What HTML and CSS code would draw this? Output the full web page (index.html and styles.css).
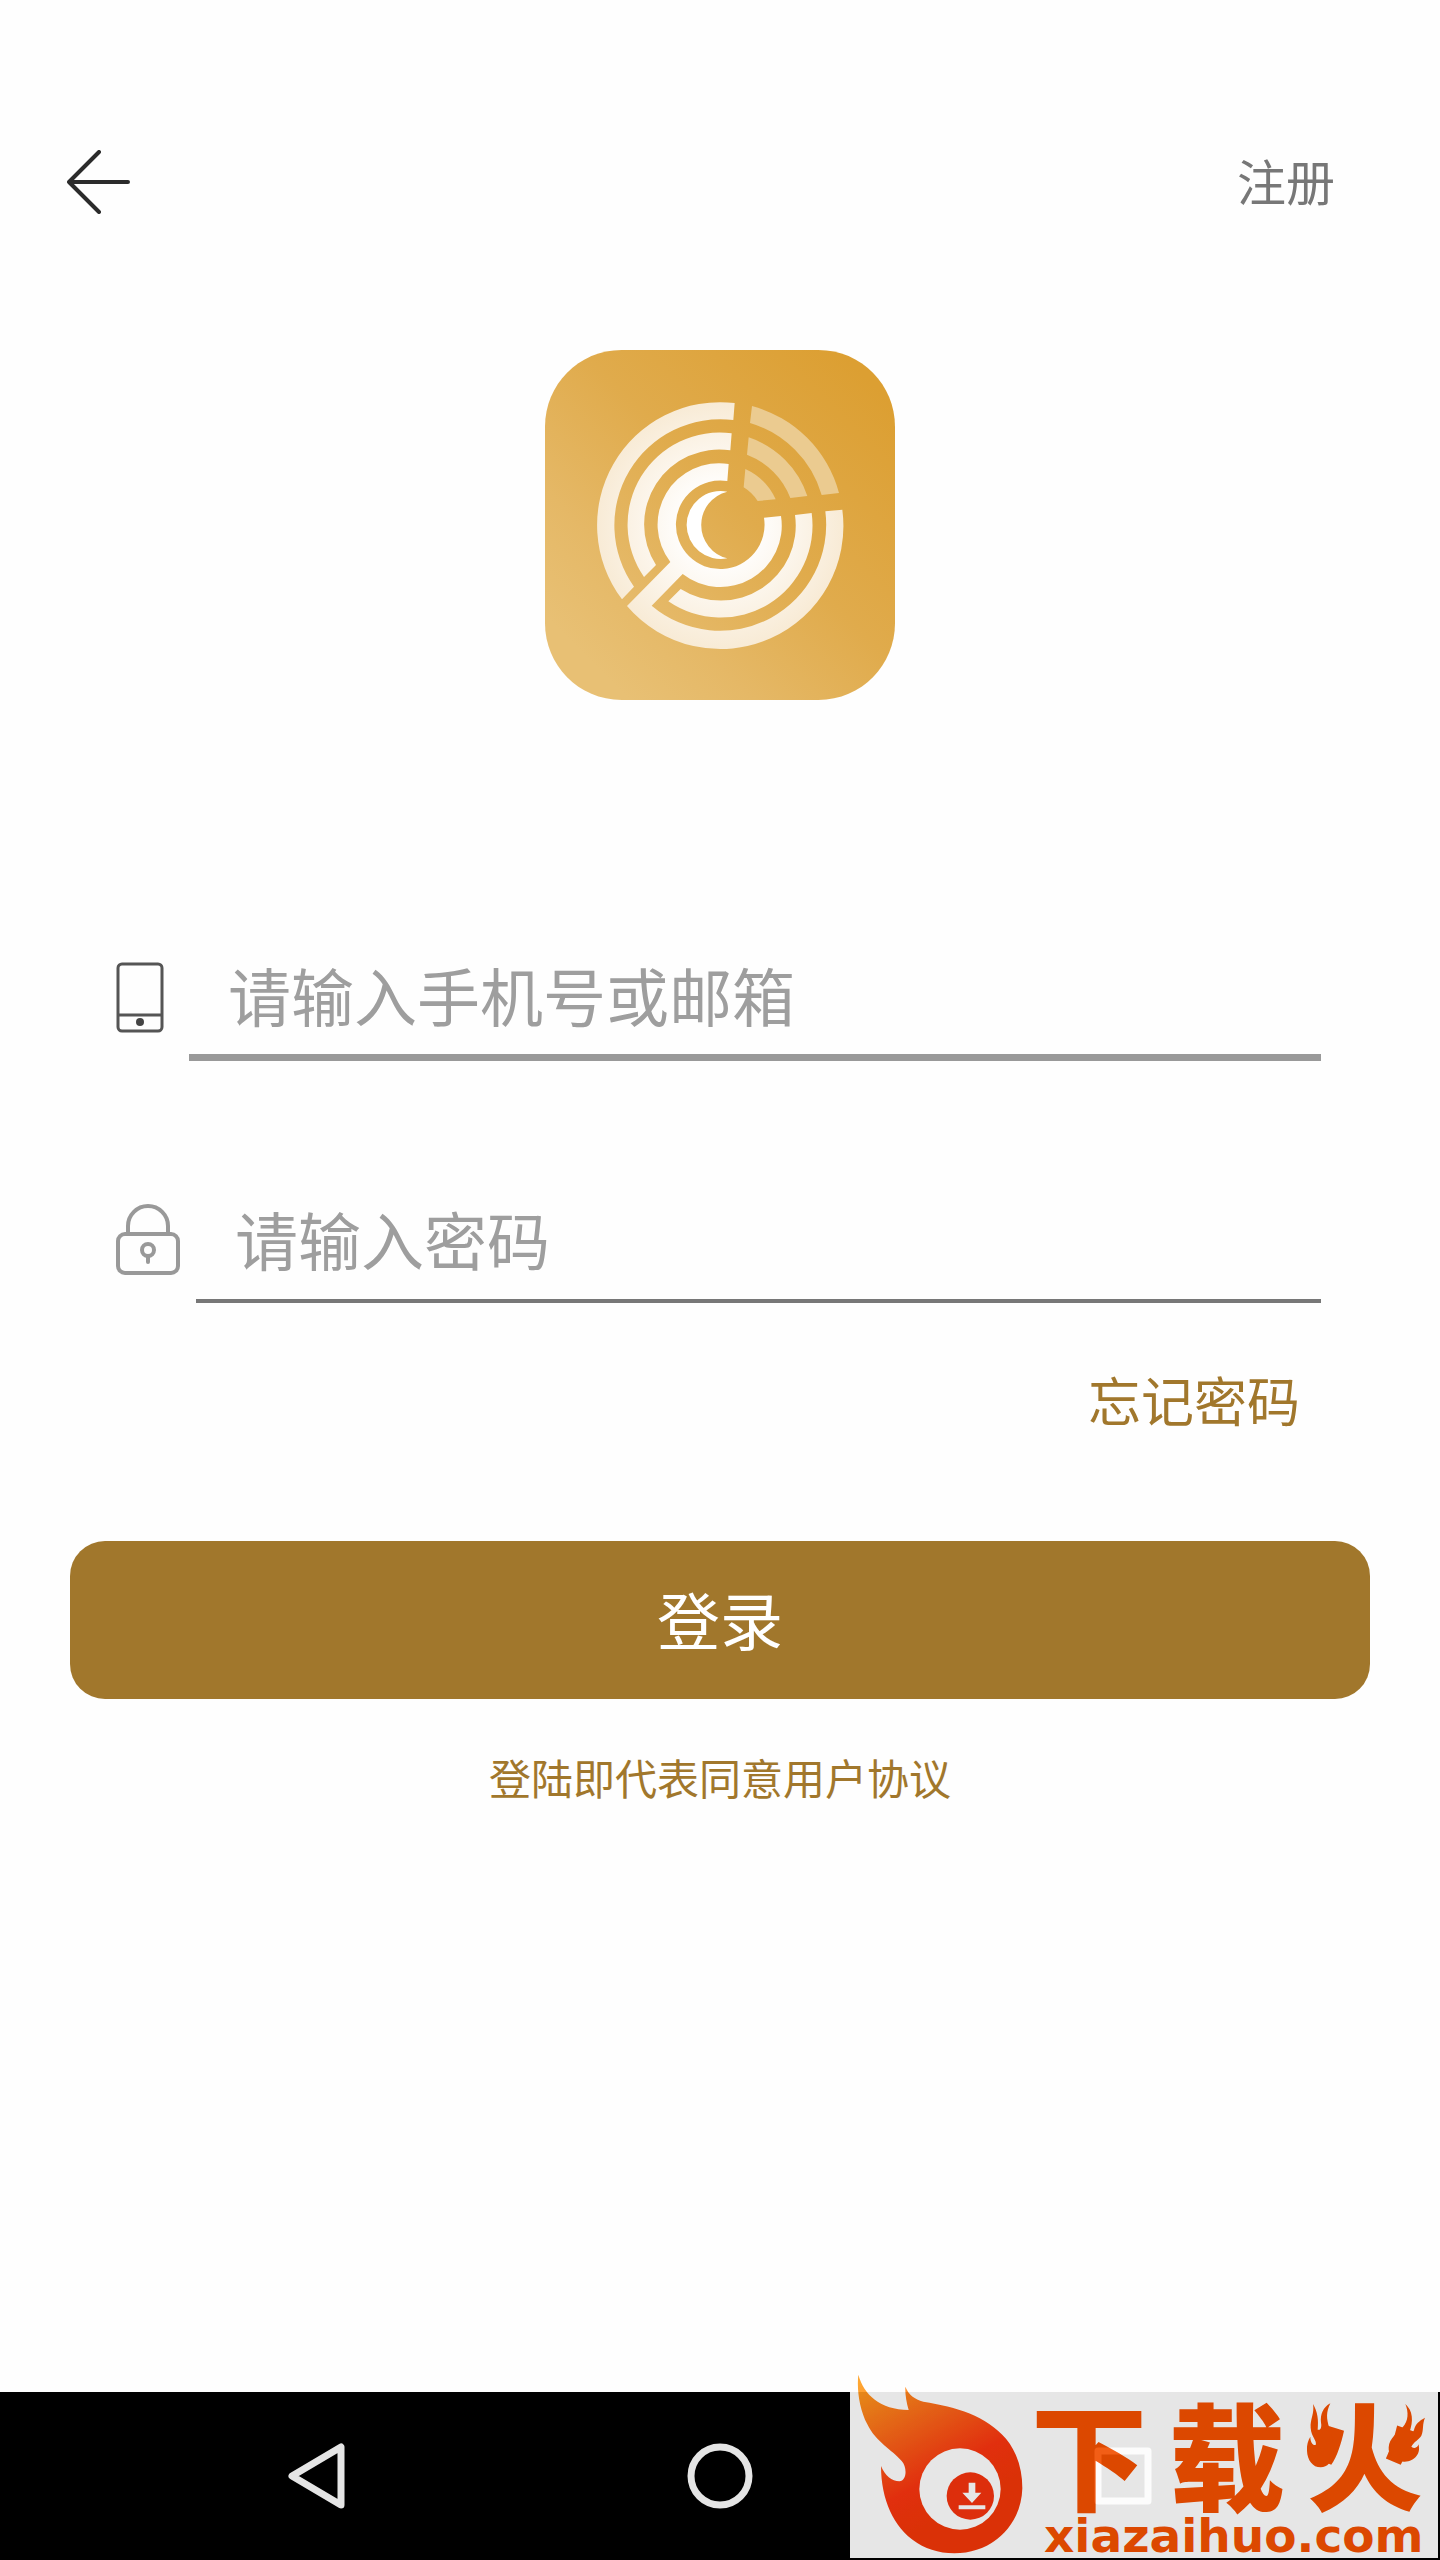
FILE: index.html
```html
<!DOCTYPE html>
<html lang="zh-CN">
<head>
<meta charset="utf-8">
<meta name="viewport" content="width=device-width, initial-scale=1">
<title>登录</title>
<link rel="stylesheet" href="styles.css">
</head>
<body>
<header class="topbar">
  <button class="back" type="button" aria-label="返回">
    <svg width="64" height="64" viewBox="0 0 64 64" fill="none" stroke="#2b2b2b" stroke-width="4" stroke-linecap="round" stroke-linejoin="round"><path d="M32 2 2 32 32 62M2 32H61"/></svg>
  </button>
  <a class="register" href="#register">注册</a>
</header>

<main class="content">
  <svg class="logo" viewBox="45 45 1050 1050" role="img" aria-label="应用标志">
    <defs>
      <linearGradient id="gold" x1="0" y1="1" x2="1" y2="0">
        <stop offset="0.12" stop-color="#e8c074"/>
        <stop offset="0.3" stop-color="#e5b866"/>
        <stop offset="0.55" stop-color="#e0ab4c"/>
        <stop offset="0.92" stop-color="#dc9f32"/>
      </linearGradient>
      <radialGradient id="ivory" gradientUnits="userSpaceOnUse" cx="570" cy="570" r="369">
        <stop offset="0.3" stop-color="#fffefd"/>
        <stop offset="1" stop-color="#f8ebd6"/>
      </radialGradient>
    </defs>
    <path fill="url(#gold)" d="M275 45H865C995 45 1095 150 1095 275V865C1095 990 995 1095 865 1095H275C145 1095 45 990 45 865V275C45 150 145 45 275 45Z"/>
    <g fill="url(#ivory)">
      <path d="M614 204A369 369 0 0 0 276 793L312 755A318 318 0 0 1 610 255Z"/>
      <path d="M605 295A276 276 0 0 0 342 726L378 690A225 225 0 0 1 601 346Z"/>
      <path d="M596 387A184 184 0 0 0 421 681L291 813A369 369 0 0 0 937 524L886 529A318 318 0 0 1 365 812L458 717A184 184 0 0 0 753 543L702 548A133 133 0 1 1 592 438Z"/>
      <path d="M845 534A276 276 0 0 1 415 799L452 762A225 225 0 0 0 795 540Z"/>
    </g>
    <path fill="#fff" d="M592 470A102 102 0 1 0 592 670A103 103 0 0 1 592 470Z"/>
    <g fill="#ebcb90">
      <path d="M666 213A369 369 0 0 1 927 474L875 480A318 318 0 0 0 660 264Z"/>
      <path d="M656 307A276 276 0 0 1 832 483L781 489A225 225 0 0 0 651 359Z"/>
      <path d="M646 402A184 184 0 0 1 737 493L683 498A133 133 0 0 0 641 457Z"/>
    </g>
  </svg>

  <form class="form">
    <div class="field field-account">
      <label for="account" aria-label="手机号或邮箱">
        <svg width="48" height="72" viewBox="0 0 48 72" fill="none" stroke="#555" stroke-width="3"><rect x="2" y="2" width="44" height="67" rx="4"/><path d="M2 53H46"/><circle cx="24" cy="60" r="4" fill="#444" stroke="none"/></svg>
      </label>
      <input id="account" type="text" placeholder="请输入手机号或邮箱">
    </div>
    <div class="field field-password">
      <label for="password" aria-label="密码">
        <svg width="64" height="72" viewBox="0 0 64 72" fill="none" stroke="#999" stroke-width="4"><rect x="2" y="30" width="60" height="39" rx="7"/><path d="M12 30V22C12 11 21 2 32 2S52 11 52 22V30"/><circle cx="32" cy="46" r="6"/><path d="M32 52V58" stroke-linecap="round"/></svg>
      </label>
      <input id="password" type="password" placeholder="请输入密码">
    </div>
    <a class="forgot" href="#forgot">忘记密码</a>
    <button class="login" type="submit">登录</button>
  </form>
  <a class="terms" href="#terms">登陆即代表同意用户协议</a>
</main>

<footer class="navbar">
  <button type="button" aria-label="后退"><svg width="66" height="66" viewBox="0 0 66 66" fill="none" stroke="#e5e5e5" stroke-width="7" stroke-linejoin="round"><path d="M57 4V62L8 33Z"/></svg></button>
  <button type="button" aria-label="主页"><svg width="66" height="66" viewBox="0 0 66 66" fill="none" stroke="#e5e5e5" stroke-width="7"><circle cx="33" cy="33" r="29"/></svg></button>
  <button type="button" aria-label="最近任务"><svg width="66" height="66" viewBox="0 0 66 66" fill="none" stroke="#e5e5e5" stroke-width="7" stroke-linejoin="round"><rect x="8" y="8" width="50" height="50"/></svg></button>
</footer>

<aside class="watermark">
  <svg class="flame" viewBox="30 36 540 558" aria-hidden="true">
    <defs>
      <linearGradient id="fire" x1="0.1" y1="0" x2="0.5" y2="0.8">
        <stop offset="0" stop-color="#ff9e1c"/>
        <stop offset="0.45" stop-color="#fb5f18"/>
        <stop offset="0.75" stop-color="#fa3510"/>
        <stop offset="1" stop-color="#f23708"/>
      </linearGradient>
    </defs>
    <path fill="url(#fire)" d="M55 44C72 105 120 148 206 150C199 126 195 102 196 80C206 104 224 118 250 125C350 141 438 166 498 236C532 278 547 330 547 385C544 498 455 580 343 580C210 580 123 470 123 318C134 346 156 364 178 364C201 362 202 322 185 303C157 270 108 247 82 193C58 147 50 88 55 44Z"/>
    <circle cx="360" cy="387" r="122" fill="#fff"/>
    <circle cx="391" cy="408" r="71" fill="#f5330e"/>
    <path fill="#fff" d="M386 368H406V398H424L396 429L367 398H386ZM356 436H436V448H356Z"/>
  </svg>
  <div class="brand">
    <div class="brand-name">
      <span>下</span><span>载</span>
      <span class="fire-char">火<svg class="sparks" viewBox="66 30 378 210" fill="currentColor" aria-hidden="true">
        <path d="M99 48C113 72 116 96 113 125C121 128 126 118 123 104C120 78 130 58 151 46C138 72 139 92 148 120C158 145 162 170 160 195C156 222 142 238 122 238C98 238 82 216 81 188C80 170 84 157 91 146C91 162 98 173 107 171C112 158 94 148 92 120C90 94 104 76 99 48Z"/>
        <path d="M376 48C398 68 402 98 387 136C390 142 398 136 402 126C406 108 418 98 435 89C426 110 432 124 424 143C416 156 402 160 394 176C404 184 414 178 415 169C424 194 405 221 374 221C344 222 324 202 326 178C328 150 352 136 368 118C386 98 386 72 376 48Z"/>
      </svg></span>
    </div>
    <div class="brand-url">xiazaihuo.com</div>
  </div>
</aside>
</body>
</html>
```
FILE: styles.css
```css
* { box-sizing: border-box; }

body {
  margin: 0;
  min-height: 100vh;
  display: flex;
  flex-direction: column;
  position: relative;
  background: #fefefe;
  color: #777;
  font-family: "Noto Sans CJK SC", sans-serif;
}

button, input { font: inherit; border: 0; padding: 0; background: none; }
a { text-decoration: none; }
svg { display: block; }

.topbar {
  display: flex;
  justify-content: space-between;
  align-items: center;
  padding: 150px 105px 0 67px;
}
.register {
  padding-bottom: 4px;
  color: #777;
  font-size: 49px;
  line-height: 60px;
}

.content {
  flex: 1;
  display: flex;
  flex-direction: column;
  align-items: center;
  padding: 136px 70px 0;
}
.logo { width: 350px; height: 350px; }

.form {
  width: 100%;
  display: flex;
  flex-direction: column;
  padding-top: 229px;
}
.field {
  display: flex;
  align-items: center;
  margin: 0 49px 0 46px;
}
.field-account { gap: 25px; margin-bottom: 110px; }
.field-password { gap: 16px; margin-bottom: 60px; }
.field label { padding-top: 6px; }
.field input {
  flex: 1;
  min-width: 0;
  height: 132px;
  padding: 4px 0 0 39px;
  font-size: 63px;
  color: #777;
  outline: 0;
}
.field input::placeholder { color: #9e9e9e; opacity: 1; }
.field-account input { border-bottom: 7px solid #999; }
.field-password input { border-bottom: 4px solid #777; }

.forgot {
  align-self: flex-end;
  padding-right: 70px;
  color: #a1772c;
  font-size: 53px;
  line-height: 72px;
}
.login {
  margin-top: 106px;
  height: 158px;
  padding-bottom: 6px;
  border-radius: 35px;
  background: #a1772c;
  color: #fff;
  font-size: 63px;
}
.terms {
  margin-top: 48px;
  color: #a1772c;
  font-size: 42px;
  line-height: 60px;
}

.navbar {
  height: 168px;
  padding: 0 8%;
  display: flex;
  justify-content: space-around;
  align-items: center;
  background: #000;
}

/* Download-site badge floating over the navigation bar */
.watermark {
  position: absolute;
  right: 2px;
  bottom: 2px;
  display: flex;
  background: #fff;
  color: #f45000;
  opacity: 0.9;
}
.flame { width: 180px; height: 186px; }
.brand { width: 408px; padding-top: 22px; }
.brand-name {
  display: flex;
  justify-content: space-between;
  padding: 0 15px 0 1px;
  font-size: 116px;
  font-weight: 900;
  line-height: 114px;
}
.fire-char { position: relative; }
.sparks {
  position: absolute;
  top: 4px;
  left: -5px;
  width: 126px;
  height: 70px;
}
.brand-url {
  padding: 10px 0 0 14px;
  font-family: "DejaVu Sans", sans-serif;
  font-size: 47px;
  font-weight: 700;
  line-height: 36px;
}
```
